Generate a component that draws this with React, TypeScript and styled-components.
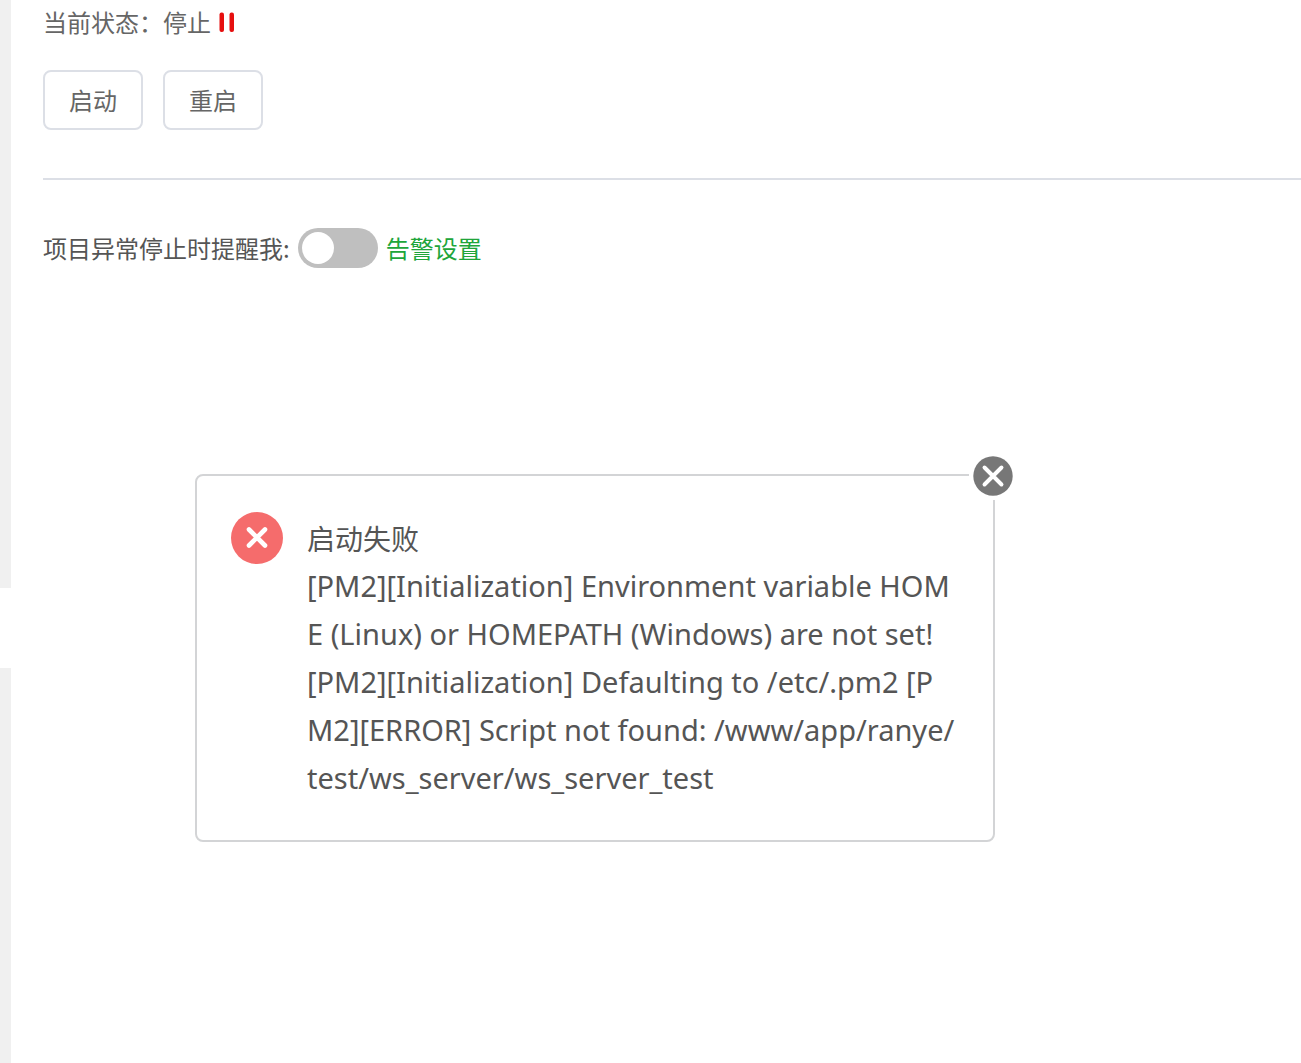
import React, { useState } from "react";
import styled, { createGlobalStyle } from "styled-components";

const GlobalStyle = createGlobalStyle`
  *, *::before, *::after { box-sizing: border-box; }
  body {
    margin: 0;
    background: #fff;
    color: #666;
    font-family: "Noto Sans CJK SC", "Noto Sans", sans-serif;
    font-size: 24px;
    line-height: 32px;
  }
  button, input { font: inherit; }
`;

const Page = styled.div`
  display: flex;
  min-height: 100vh;
`;

const Rail = styled.nav`
  display: flex;
  flex-direction: column;
  flex: 0 0 11px;
`;

const RailPart = styled.div<{ $size?: number; $active?: boolean }>`
  flex: ${(p) => (p.$size ? `0 0 ${p.$size}px` : "1")};
  background: ${(p) => (p.$active ? "#fff" : "#f0f0f0")};
`;

const Main = styled.main`
  flex: 1;
  min-width: 0;
  padding: 6px 0 32px 32px;
`;

const Status = styled.div`
  display: flex;
  align-items: center;
  gap: 8px;
`;

const Actions = styled.div`
  display: flex;
  gap: 20px;
  padding: 32px 0 48px;
  border-bottom: 2px solid #dcdfe6;
`;

const ActionButton = styled.button`
  width: 100px;
  height: 60px;
  padding: 0;
  border: 2px solid #dcdfe6;
  border-radius: 8px;
  background: #fff;
  color: #666;
  cursor: pointer;
`;

const AlertRow = styled.div`
  display: flex;
  align-items: center;
  gap: 8px;
  padding-top: 48px;
  color: #555;
`;

const Toggle = styled.input`
  appearance: none;
  width: 80px;
  height: 40px;
  margin: 0;
  padding: 4px;
  border-radius: 20px;
  background: #bfbfbf;
  cursor: pointer;

  &::before {
    content: "";
    display: block;
    width: 32px;
    height: 32px;
    border-radius: 50%;
    background: #fff;
  }
  &:checked { background: #20a53a; }
  &:checked::before { margin-left: auto; }
`;

const SettingsLink = styled.a`
  color: #20a53a;
  text-decoration: none;
`;

const Dialog = styled.section`
  position: relative;
  display: flex;
  align-items: flex-start;
  gap: 24px;
  max-width: 800px;
  margin: 206px 32px 0 152px;
  padding: 36px 36px 36px 34px;
  border: 2px solid #d3d4d6;
  border-radius: 8px;
  background: #fff;
  color: #555;
  font-size: 28px;
  line-height: 48px;
`;

const ErrorIcon = styled.svg`
  flex: 0 0 52px;
  height: 52px;
`;

const Message = styled.div`
  flex: 1;
  min-width: 0;
  padding: 2px 0;
  word-break: break-all;
`;

const Title = styled.h2`
  margin: 0;
  font-size: 28px;
  font-weight: 400;
`;

const Detail = styled.p`
  margin: 0;
  font-family: "Noto Sans", "Noto Sans CJK SC", sans-serif;
  font-size: 29px;
`;

const CloseButton = styled.button`
  position: absolute;
  top: -24px;
  right: -24px;
  width: 48px;
  height: 48px;
  padding: 4px;
  border: 0;
  background: #fff;
  cursor: pointer;

  svg { display: block; }
`;

export default function App() {
  const [notify, setNotify] = useState(false);
  const [open, setOpen] = useState(true);

  return (
    <>
      <GlobalStyle />
      <Page>
        <Rail>
          <RailPart $size={588} />
          <RailPart $size={80} $active />
          <RailPart />
        </Rail>
        <Main>
          <Status>
            <span>当前状态：停止</span>
            <svg width="16" height="20" viewBox="0 0 16 20" aria-hidden="true">
              <rect x="0.5" y="0.5" width="4.5" height="19.5" rx="2" fill="#e60f0f" />
              <rect x="10.5" y="0.5" width="4.5" height="19.5" rx="2" fill="#e60f0f" />
            </svg>
          </Status>
          <Actions>
            <ActionButton type="button">启动</ActionButton>
            <ActionButton type="button">重启</ActionButton>
          </Actions>
          <AlertRow>
            <label htmlFor="notify">项目异常停止时提醒我:</label>
            <Toggle
              id="notify"
              type="checkbox"
              checked={notify}
              onChange={(e) => setNotify(e.target.checked)}
            />
            <SettingsLink href="#alerts">告警设置</SettingsLink>
          </AlertRow>
          {open && (
            <Dialog role="alertdialog" aria-labelledby="dialog-title">
              <ErrorIcon viewBox="0 0 52 52" aria-hidden="true">
                <circle cx="26" cy="26" r="26" fill="#f56c6c" />
                <path d="M18 17.5L34 33.5M34 17.5L18 33.5" stroke="#fff" strokeWidth="4.6" strokeLinecap="round" />
              </ErrorIcon>
              <Message>
                <Title id="dialog-title">启动失败</Title>
                <Detail>
                  [PM2][Initialization] Environment variable HOME (Linux) or HOMEPATH (Windows) are not set!
                  <br />
                  [PM2][Initialization] Defaulting to /etc/.pm2 [PM2][ERROR] Script not found:
                  /www/app/ranye/test/ws_server/ws_server_test
                </Detail>
              </Message>
              <CloseButton type="button" aria-label="关闭" onClick={() => setOpen(false)}>
                <svg width="40" height="40" viewBox="0 0 40 40" aria-hidden="true">
                  <circle cx="20" cy="20" r="19.7" fill="#777" />
                  <path d="M11.5 11.5L28.5 28.5M28.5 11.5L11.5 28.5" stroke="#fff" strokeWidth="3.9" strokeLinecap="round" />
                </svg>
              </CloseButton>
            </Dialog>
          )}
        </Main>
      </Page>
    </>
  );
}
